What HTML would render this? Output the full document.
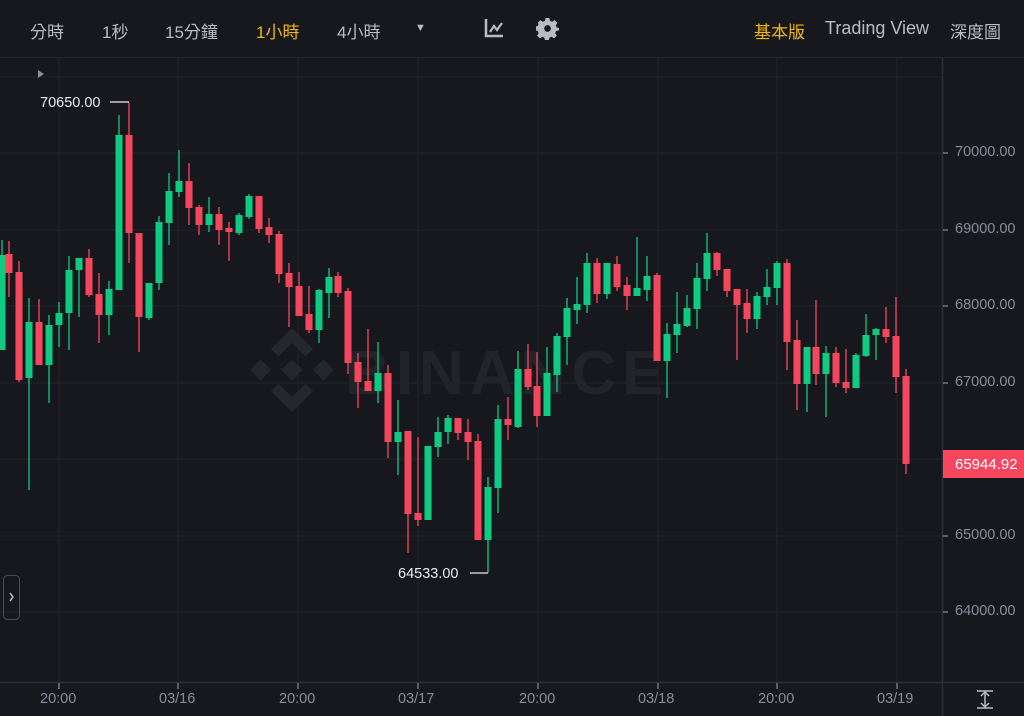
<!DOCTYPE html>
<html><head><meta charset="utf-8"><style>
html,body{margin:0;padding:0;background:#17181d;width:1024px;height:716px;overflow:hidden;font-family:"Liberation Sans","Noto Sans CJK TC",sans-serif}
.tb{position:absolute;top:0;left:0;width:1024px;height:57px;border-bottom:1px solid #24262b}
.t{position:absolute;top:18px;font-size:17px;color:#b7bdc6;font-family:"Liberation Sans","Noto Sans CJK TC",sans-serif;white-space:nowrap}
.y{color:#f0b90b}
.p{position:absolute;left:955px;font-size:14.5px;color:#848e9c}
.d{position:absolute;top:691px;font-size:14.5px;color:#848e9c}
</style></head><body>
<div class="tb"></div>
<div class="t" style="left:30px">分時</div>
<div class="t" style="left:102px">1秒</div>
<div class="t" style="left:165px">15分鐘</div>
<div class="t y" style="left:256px">1小時</div>
<div class="t" style="left:337px">4小時</div>
<div class="t" style="left:415px;font-size:11px;top:22px">▼</div>
<svg style="position:absolute;left:483px;top:17px" width="22" height="22" viewBox="0 0 22 22"><path d="M3 2V19H20" stroke="#b7bdc6" stroke-width="2.5" fill="none"/><path d="M7 15L11 9L14 13L19 6" stroke="#b7bdc6" stroke-width="2.2" fill="none"/></svg>
<svg style="position:absolute;left:536px;top:17px" width="23" height="23" viewBox="0 0 24 24"><path fill="#b7bdc6" d="M10 1h4l.6 3 2.3 1 2.6-1.7 2.8 2.8L20.6 8.7l1 2.3 3 .6v0h-.6V14l-3 .6-1 2.3 1.7 2.6-2.8 2.8-2.6-1.7-2.3 1-.6 3h-4l-.6-3-2.3-1-2.6 1.7-2.8-2.8 1.7-2.6-1-2.3-3-.6v-4l3-.6 1-2.3L1.7 6.1 4.5 3.3 7.1 5l2.3-1z"/><circle cx="12" cy="12" r="3.5" fill="#17181d"/></svg>
<div class="t y" style="left:754px">基本版</div>
<div class="t" style="left:825px;font-size:18px">Trading View</div>
<div class="t" style="left:950px">深度圖</div>

<svg style="position:absolute;left:0;top:0" width="1024" height="716">
<g stroke="#202328" stroke-width="1">
<line x1="0" y1="77" x2="942" y2="77"/><line x1="0" y1="153" x2="942" y2="153"/><line x1="0" y1="230" x2="942" y2="230"/><line x1="0" y1="306" x2="942" y2="306"/><line x1="0" y1="383" x2="942" y2="383"/><line x1="0" y1="459" x2="942" y2="459"/><line x1="0" y1="536" x2="942" y2="536"/><line x1="0" y1="612" x2="942" y2="612"/>
<line x1="59" y1="58" x2="59" y2="682"/><line x1="178" y1="58" x2="178" y2="682"/><line x1="298" y1="58" x2="298" y2="682"/><line x1="418" y1="58" x2="418" y2="682"/><line x1="538" y1="58" x2="538" y2="682"/><line x1="658" y1="58" x2="658" y2="682"/><line x1="777" y1="58" x2="777" y2="682"/><line x1="897" y1="58" x2="897" y2="682"/>
</g>
<g stroke="#2b2e33" stroke-width="1.5"><line x1="942.5" y1="58" x2="942.5" y2="716"/><line x1="0" y1="682.5" x2="1024" y2="682.5"/></g>
<g stroke="#848e9c" stroke-width="1.2">
<line x1="59" y1="683" x2="59" y2="689"/><line x1="178" y1="683" x2="178" y2="689"/><line x1="298" y1="683" x2="298" y2="689"/><line x1="418" y1="683" x2="418" y2="689"/><line x1="538" y1="683" x2="538" y2="689"/><line x1="658" y1="683" x2="658" y2="689"/><line x1="777" y1="683" x2="777" y2="689"/><line x1="897" y1="683" x2="897" y2="689"/>
<line x1="943" y1="153" x2="948" y2="153"/><line x1="943" y1="230" x2="948" y2="230"/><line x1="943" y1="306" x2="948" y2="306"/><line x1="943" y1="383" x2="948" y2="383"/><line x1="943" y1="536" x2="948" y2="536"/><line x1="943" y1="612" x2="948" y2="612"/>
</g>
<g fill="#25272c" transform="translate(292,370) scale(1.5)">
<path d="M0-28L14-14 9-9 0-18-9-9-14-14Z"/><path d="M0 28L14 14 9 9 0 18-9 9-14 14Z"/><path d="M0-7L7 0 0 7-7 0Z"/><path d="M-28 0L-21-7-14 0-21 7Z"/><path d="M28 0L21-7 14 0 21 7Z"/>
</g>
<text x="345" y="394" font-family="Liberation Sans" font-weight="bold" font-size="62" fill="#222429" letter-spacing="6">BINANCE</text>
<path d="M38 70L44 74 38 78Z" fill="#848e9c"/>
<g stroke="#0ecb81" stroke-width="1.3" fill="#0ecb81" id="G"></g>
<g stroke="#f6465d" stroke-width="1.3" fill="#f6465d" id="R"></g>
<line x1="110" y1="102" x2="129" y2="102" stroke="#eaecef" stroke-width="1.2"/>
<line x1="470" y1="573" x2="488" y2="573" stroke="#eaecef" stroke-width="1.2"/>
<text x="40" y="107" font-family="Liberation Sans" font-size="14.5" fill="#eaecef">70650.00</text>
<text x="398" y="578" font-family="Liberation Sans" font-size="14.5" fill="#eaecef">64533.00</text>
<rect x="943" y="450" width="81" height="28" fill="#f6465d"/>
<text x="955" y="469" font-family="Liberation Sans" font-size="15" fill="#fff">65944.92</text>
<rect x="3.5" y="575.5" width="16" height="44" rx="4" fill="none" stroke="#474d57"/>
<path d="M10 593L13 597 10 601" stroke="#b7bdc6" stroke-width="1.5" fill="none"/>
<g stroke="#b7bdc6" stroke-width="1.5" fill="none"><line x1="977" y1="691" x2="993" y2="691"/><line x1="977" y1="708" x2="993" y2="708"/><line x1="985" y1="692" x2="985" y2="707"/><path d="M981 696L985 692 989 696M981 703L985 707 989 703"/></g>
</svg>
<div class="p" style="top:144px">70000.00</div>
<div class="p" style="top:221px">69000.00</div>
<div class="p" style="top:297px">68000.00</div>
<div class="p" style="top:374px">67000.00</div>
<div class="p" style="top:527px">65000.00</div>
<div class="p" style="top:603px">64000.00</div>
<div class="d" style="left:40px">20:00</div>
<div class="d" style="left:159px">03/16</div>
<div class="d" style="left:279px">20:00</div>
<div class="d" style="left:398px">03/17</div>
<div class="d" style="left:519px">20:00</div>
<div class="d" style="left:638px">03/18</div>
<div class="d" style="left:758px">20:00</div>
<div class="d" style="left:877px">03/19</div>
<script>
var c=[["G",2,255,350,240,350],["R",9,254,273,241,297],["R",19,272,380,261,382],["G",29,322,378,298,490],["R",39,322,365,299,365],["G",49,325,365,315,403],["G",59,313,325,302,347],["G",69,270,313,256,350],["G",79,258,270,258,317],["R",89,258,295,249,297],["R",99,294,315,273,343],["G",109,289,315,281,335],["G",119,135,290,115,290],["R",129,135,233,103,263],["R",139,233,317,233,352],["G",149,283,318,283,320],["G",159,222,283,216,290],["G",169,191,223,173,245],["G",179,181,192,150,197],["R",189,181,208,163,225],["R",199,207,225,205,235],["G",209,214,225,197,232],["R",219,214,230,207,245],["R",229,228,232,222,261],["G",239,215,233,213,235],["G",249,196,217,194,219],["R",259,196,229,196,233],["R",269,227,235,218,243],["R",279,234,274,231,283],["R",289,273,287,263,327],["R",299,286,316,272,316],["R",309,314,330,286,333],["G",319,290,330,289,343],["G",329,277,293,268,318],["R",338,276,293,272,297],["R",348,291,363,288,374],["R",358,362,382,353,408],["R",368,381,391,329,391],["G",378,373,391,342,403],["R",388,373,442,365,458],["G",398,432,442,400,475],["R",408,431,514,431,553],["R",418,513,520,437,526],["G",428,446,520,446,520],["G",438,432,447,417,457],["G",448,418,432,415,444],["R",458,418,433,418,440],["R",468,432,442,419,460],["R",478,441,540,434,540],["G",488,487,540,477,573],["G",498,419,488,405,513],["R",508,419,425,397,440],["G",518,369,427,351,428],["R",528,369,387,344,390],["R",537,386,416,352,427],["G",547,373,416,347,416],["G",557,336,375,333,392],["G",567,308,337,298,365],["G",577,304,310,277,324],["G",587,263,305,253,313],["R",597,263,294,258,303],["G",607,263,294,263,299],["R",617,264,287,256,291],["R",627,285,296,277,310],["G",637,288,296,237,296],["G",647,276,290,256,301],["R",657,275,361,273,361],["G",667,334,361,323,398],["G",677,324,335,292,353],["G",687,308,326,295,327],["G",697,278,309,263,329],["G",707,253,279,233,291],["R",717,253,270,252,276],["R",727,269,291,269,297],["R",737,289,305,289,360],["R",747,303,319,289,333],["G",757,296,319,292,329],["G",767,287,297,269,305],["G",777,263,288,261,305],["R",787,263,342,259,370],["R",797,340,384,320,410],["G",807,347,384,347,412],["R",816,347,374,300,385],["G",826,353,374,346,417],["R",836,353,383,347,387],["R",846,382,388,349,393],["G",856,355,388,353,388],["G",866,335,356,314,357],["G",876,329,335,328,360],["R",886,329,337,307,343],["R",896,336,377,297,393],["R",906,376,464,369,474]];
var ns="http://www.w3.org/2000/svg";
c.forEach(function(a){var g=document.getElementById(a[0]);var l=document.createElementNS(ns,"line");l.setAttribute("x1",a[1]);l.setAttribute("x2",a[1]);l.setAttribute("y1",a[4]);l.setAttribute("y2",a[5]);g.appendChild(l);var r=document.createElementNS(ns,"rect");r.setAttribute("x",a[1]-3.5);r.setAttribute("width",7);r.setAttribute("y",a[2]);r.setAttribute("height",Math.max(2,a[3]-a[2]));r.setAttribute("stroke","none");g.appendChild(r);});
</script>
</body></html>
